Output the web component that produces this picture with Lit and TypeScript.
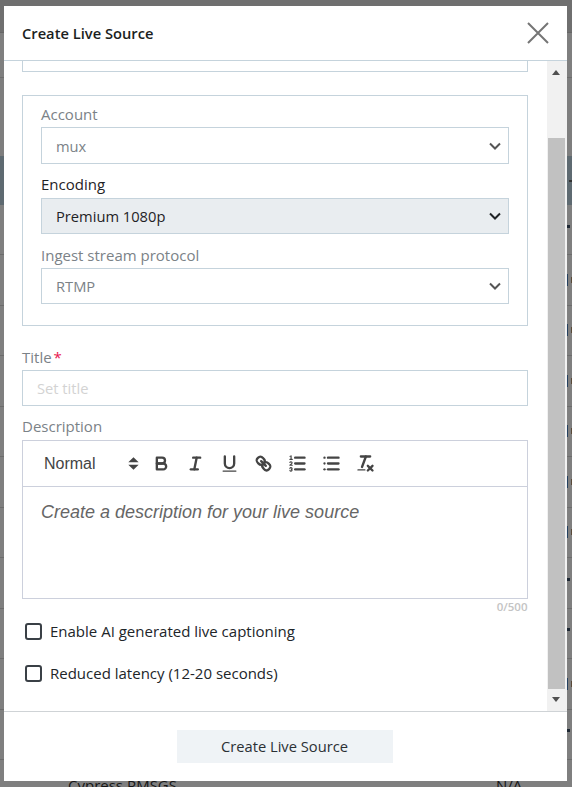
import { LitElement, html, css, svg } from "lit";
import { customElement } from "lit/decorators.js";

const chevron = html`<svg class="chev" viewBox="0 0 16 16" width="16" height="16"><path d="M3 5.5l5 5 5-5" fill="none" stroke="currentColor" stroke-width="2"/></svg>`;

const icons = [
  svg`<path class="s" d="M5,4H9.5A2.5,2.5,0,0,1,12,6.5v0A2.5,2.5,0,0,1,9.5,9H5A0,0,0,0,1,5,9V4A0,0,0,0,1,5,4Z"/><path class="s" d="M5,9h5.5A2.5,2.5,0,0,1,13,11.5v0A2.5,2.5,0,0,1,10.5,14H5a0,0,0,0,1,0,0V9A0,0,0,0,1,5,9Z"/>`,
  svg`<line class="s" x1="7" x2="13" y1="4" y2="4"/><line class="s" x1="5" x2="11" y1="14" y2="14"/><line class="s" x1="8" x2="10" y1="14" y2="4"/>`,
  svg`<path class="s" d="M5,3V9a4.012,4.012,0,0,0,4,4H9a4.012,4.012,0,0,0,4-4V3"/><rect class="f" height="1" rx="0.5" ry="0.5" width="12" x="3" y="15"/>`,
  svg`<line class="s" x1="7" x2="11" y1="7" y2="11"/><path class="s" d="M8.9,4.577a3.476,3.476,0,0,1,.36,4.679A3.476,3.476,0,0,1,4.577,8.9C3.185,7.5,2.035,6.4,4.217,4.217S7.5,3.185,8.9,4.577Z"/><path class="s" d="M13.423,9.1a3.476,3.476,0,0,0-4.679-.36,3.476,3.476,0,0,0,.36,4.679c1.392,1.392,2.5,2.542,4.679.36S14.815,10.5,13.423,9.1Z"/>`,
  svg`<line class="s" x1="7" x2="15" y1="4" y2="4"/><line class="s" x1="7" x2="15" y1="9" y2="9"/><line class="s" x1="7" x2="15" y1="14" y2="14"/><line class="t" x1="2.5" x2="4.5" y1="5.5" y2="5.5"/><path class="f" d="M3.5,6A0.5,0.5,0,0,1,3,5.5V3.085l-0.276.138A0.5,0.5,0,0,1,2.053,3c-0.124-.247-0.023-0.324.224-0.447l1-.5A0.5,0.5,0,0,1,4,2.5v3A0.5,0.5,0,0,1,3.5,6Z"/><path class="t" d="M4.5,10.5h-2c0-.234,1.85-1.076,1.85-2.234A0.959,0.959,0,0,0,2.5,8.156"/><path class="t" d="M2.5,14.846a0.959,0.959,0,0,0,1.85-.109A0.7,0.7,0,0,0,3.75,14a0.688,0.688,0,0,0,.6-0.736,0.959,0.959,0,0,0-1.85-.109"/>`,
  svg`<line class="s" x1="6" x2="15" y1="4" y2="4"/><line class="s" x1="6" x2="15" y1="9" y2="9"/><line class="s" x1="6" x2="15" y1="14" y2="14"/><line class="s" x1="3" x2="3" y1="4" y2="4"/><line class="s" x1="3" x2="3" y1="9" y2="9"/><line class="s" x1="3" x2="3" y1="14" y2="14"/>`,
  svg`<line class="s" x1="5" x2="13" y1="3" y2="3"/><line class="s" x1="6" x2="9.35" y1="12" y2="3"/><line class="s" x1="11" x2="15" y1="11" y2="15"/><line class="s" x1="15" x2="11" y1="11" y2="15"/><rect class="f" height="1" rx="0.5" ry="0.5" width="7" x="2" y="14"/>`,
];

// right-edge marker per backdrop row: b = blue bar + brown glyph, s = stray glyph
const rows: string[] = ["b", "b", "b", "b", "b", "b", "s", "s", "b", "s", "t"];

@customElement("app-root")
export class AppRoot extends LitElement {
  static styles = css`
    :host { display: block; position: relative; width: 572px; height: 787px; overflow: hidden; background: #7f7f7f; font-family: "Open Sans", sans-serif; font-size: 15px; }
    * { box-sizing: border-box; }

    /* page behind the dialog */
    .backdrop { display: flex; flex-direction: column; color: #161616; }
    .top { height: 33px; background: #6f6f6f; border-bottom: 1px solid #666; }
    .nav { height: 45px; border-bottom: 1px solid #6d6d6d; }
    .gap { height: 78px; background: #7e7e7e; }
    .head { height: 49px; background: #5e6a71; display: flex; justify-content: flex-end; align-items: center; color: #2b2b2b; }
    .head span { width: 3px; height: 2px; background: #333; }
    .first { height: 50px; border-bottom: 1px solid #6c6c6c; display: flex; justify-content: flex-end; align-items: center; }
    .row { height: 50.5px; border-bottom: 1px solid #6c6c6c; display: flex; align-items: center; padding-left: 68px; white-space: nowrap; }
    .row:last-child { border-bottom: 0; }
    .name { width: 428px; flex: none; }
    .mark { margin-left: auto; width: 5px; height: 12px; display: flex; gap: 3px; align-items: center; flex: none; overflow: hidden; }
    .bar { width: 1px; height: 12px; background: #24405f; flex: none; }
    .dot { width: 2px; height: 6px; background: #5a4a38; flex: none; }
    .stray { width: 3px; height: 3px; background: #1d2733; flex: none; align-self: flex-start; margin-top: 1px; }

    /* dialog */
    .modal { position: absolute; left: 4px; top: 6px; width: 563px; height: 775px; background: #fff; display: flex; flex-direction: column; color: #212529; }
    .hdr { height: 55px; flex: none; border-bottom: 1px solid #c5d3dc; display: flex; align-items: center; justify-content: space-between; padding: 0 18px 0 18px; }
    .hdr h1 { margin: 0; font-size: 14.7px; font-weight: 600; color: #1b1e21; }
    .close { display: block; width: 22px; height: 22px; }
    .close path { stroke: #757575; stroke-width: 2; fill: none; }
    .mid { flex: 1; min-height: 0; display: flex; }
    .content { flex: 1; min-width: 0; padding: 0 19px 0 18px; overflow: hidden; }
    .clip { height: 11px; border: 1px solid #c5d3dc; border-top: 0; }
    .panel { margin-top: 23px; height: 231px; border: 1px solid #c5d3dc; padding: 8px 18px 0; }
    .lbl { display: block; height: 22px; line-height: 20px; font-size: 15px; color: #7b8287; white-space: nowrap; }
    .lbl.on { color: #1f2326; }
    .req { color: #e8174f; margin-left: 2px; }
    .sel { display: flex; align-items: center; justify-content: space-between; height: 37px; border: 1px solid #c5d3dc; padding: 0 5px 0 14px; color: #7b8287; margin-top: 1px; margin-bottom: 10px; font-size: 14.7px; }
    .sel .chev { color: #555; }
    .sel.on { height: 36px; background: #e9edf0; color: #1f2326; margin-bottom: 11px; margin-top: 2px; }
    .sel.on .chev { color: #1f2326; }
    .sel.short { height: 36px; }
    .chev { flex: none; }
    .title-lbl { margin-top: 21px; }
    .input { display: block; width: 100%; height: 36px; border: 1px solid #c5d3dc; margin: 1px 0 10px; padding: 0 14px; font: inherit; font-size: 14.7px; color: #212529; outline: none; border-radius: 0; }
    .input::placeholder { color: #d3d3d3; opacity: 1; }
    .editor { height: 159px; border: 1px solid #ccd0dc; margin-top: 2px; }
    .tools { height: 46px; border-bottom: 1px solid #ccd0dc; display: flex; align-items: center; padding-left: 21px; }
    .picker { width: 100px; display: flex; align-items: center; justify-content: space-between; font-family: "Liberation Sans", sans-serif; font-size: 16px; color: #444; }
    .tool { width: 34px; display: flex; justify-content: center; flex: none; }
    .tool svg, .picker svg { display: block; width: 21px; height: 21px; }
    .s { fill: none; stroke: #444; stroke-width: 2; stroke-linecap: round; stroke-linejoin: round; }
    .t { fill: none; stroke: #444; stroke-width: 1; stroke-linecap: round; stroke-linejoin: round; }
    .f { fill: #444; }
    .picker .s { stroke-linejoin: miter; fill: #444; }
    .ph { padding: 15px 18px; font-family: "Liberation Sans", sans-serif; font-style: italic; font-size: 18px; line-height: 20px; color: #666; }
    .count { text-align: right; font-size: 11.5px; line-height: 16px; font-weight: 600; color: #c4c4c4; }
    .chk { display: flex; align-items: center; gap: 8px; padding-left: 3px; height: 18px; margin-top: 7px; }
    .chk + .chk { margin-top: 24px; }
    .chk input { appearance: none; -webkit-appearance: none; margin: 0; width: 17px; height: 17px; border: 2px solid #3a4046; border-radius: 3px; background: #fff; flex: none; }
    .chk label { color: #212529; white-space: nowrap; }
    .sb { width: 20.5px; flex: none; background: #f1f1f1; display: flex; flex-direction: column; align-items: center; padding-right: 1.5px; }
    .sb-up { height: 77px; display: flex; justify-content: center; padding-top: 9px; flex: none; }
    .tri { width: 0; height: 0; border-left: 4.5px solid transparent; border-right: 4.5px solid transparent; }
    .tri.u { border-bottom: 5px solid #505050; }
    .tri.d { border-top: 5px solid #505050; }
    .thumb { width: 17px; flex: 1; background: #c1c1c1; }
    .sb-dn { height: 22px; display: flex; justify-content: center; padding-top: 8px; flex: none; }
    .ftr { height: 70px; flex: none; border-top: 1px solid #cfd3d6; display: flex; justify-content: center; padding-top: 18px; padding-right: 2px; }
    .btn { width: 216px; height: 33px; border: 0; background: #eff3f6; font: inherit; font-size: 14.7px; color: #2b3034; padding: 0 0 2px; }
  `;

  private sel(value: string, cls = "") {
    return html`<div class="sel ${cls}"><span>${value}</span>${chevron}</div>`;
  }

  render() {
    return html`
      <div class="backdrop">
        <div class="top"></div>
        <div class="nav"></div>
        <div class="gap"></div>
        <div class="head"><span></span></div>
        <div class="first"><span class="mark"><i class="stray"></i></span></div>
        ${rows.map((m) => html`
          <div class="row">
            ${m === "t" ? html`<span class="name">Cypress RMSGS</span><span>N/A</span>` : html`
              <span class="mark">${m === "s" ? html`<i class="stray"></i>` : html`<i class="bar"></i><i class="dot"></i>`}</span>`}
          </div>`)}
      </div>

      <section class="modal">
        <header class="hdr">
          <h1>Create Live Source</h1>
          <svg class="close" viewBox="0 0 22 22"><path d="M1 1l20 20M21 1L1 21"/></svg>
        </header>
        <div class="mid">
          <div class="content">
            <div class="clip"></div>
            <div class="panel">
              <span class="lbl">Account</span>
              ${this.sel("mux")}
              <span class="lbl on">Encoding</span>
              ${this.sel("Premium 1080p", "on")}
              <span class="lbl">Ingest stream protocol</span>
              ${this.sel("RTMP", "short")}
            </div>
            <span class="lbl title-lbl">Title<span class="req">*</span></span>
            <input class="input" placeholder="Set title" />
            <span class="lbl">Description</span>
            <div class="editor">
              <div class="tools">
                <div class="picker"><span>Normal</span>
                  <svg viewBox="0 0 18 18"><polygon class="s" points="7 11 9 13 11 11 7 11"/><polygon class="s" points="7 7 9 5 11 7 7 7"/></svg>
                </div>
                ${icons.map((p) => html`<span class="tool"><svg viewBox="0 0 18 18">${p}</svg></span>`)}
              </div>
              <div class="ph">Create a description for your live source</div>
            </div>
            <div class="count">0/500</div>
            <div class="chk"><input type="checkbox" id="c1" /><label for="c1">Enable AI generated live captioning</label></div>
            <div class="chk"><input type="checkbox" id="c2" /><label for="c2">Reduced latency (12-20 seconds)</label></div>
          </div>
          <div class="sb">
            <div class="sb-up"><i class="tri u"></i></div>
            <div class="thumb"></div>
            <div class="sb-dn"><i class="tri d"></i></div>
          </div>
        </div>
        <footer class="ftr"><button class="btn">Create Live Source</button></footer>
      </section>
    `;
  }
}
